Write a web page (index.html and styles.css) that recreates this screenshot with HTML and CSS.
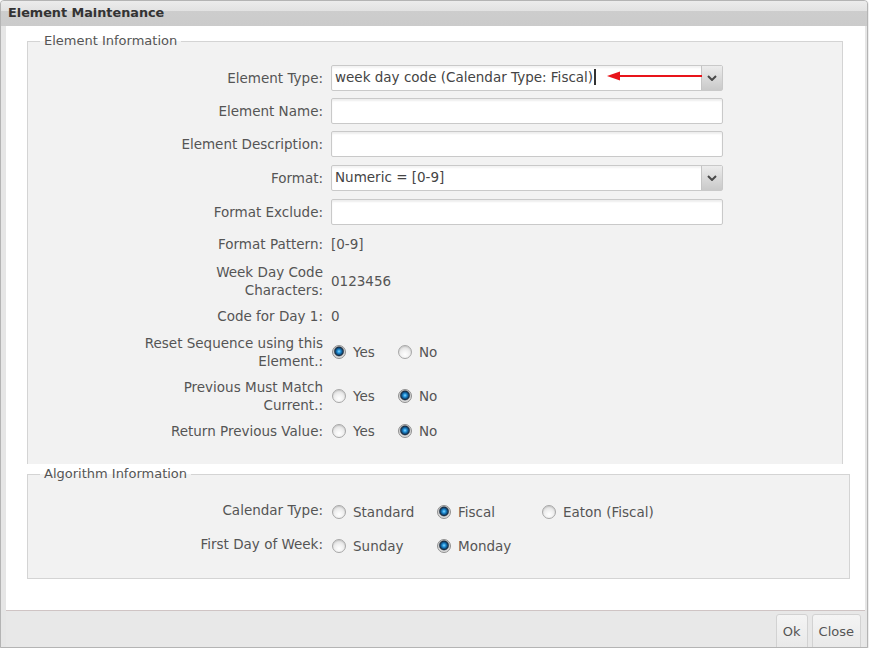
FILE: index.html
```html
<!DOCTYPE html>
<html>
<head>
<meta charset="utf-8">
<title>Element Maintenance</title>
<link rel="stylesheet" href="styles.css">
</head>
<body>
<div class="dialog">
  <div class="titlebar">Element Maintenance</div>
  <div class="frame">
    <div class="panel">
      <fieldset class="group group-element">
        <legend>Element Information</legend>
        <div class="row">
          <div class="label">Element Type:</div>
          <div class="select">
            <span class="select-text">week day code (Calendar Type: Fiscal)<span class="caret"></span></span>
            <span class="select-btn"><svg width="10" height="6" viewBox="0 0 10 6"><path d="M1 1 L5 5 L9 1" fill="none" stroke="#4a4a4a" stroke-width="2"/></svg></span>
            <svg class="annot" width="100" height="12" viewBox="0 0 100 12"><line x1="10" y1="6" x2="95" y2="6" stroke="#e8141a" stroke-width="2"/><path d="M0 6 L13 1.5 L13 10.5 Z" fill="#e8141a"/></svg>
          </div>
        </div>
        <div class="row tight">
          <div class="label">Element Name:</div>
          <div class="input"></div>
        </div>
        <div class="row tight">
          <div class="label">Element Description:</div>
          <div class="input"></div>
        </div>
        <div class="row">
          <div class="label">Format:</div>
          <div class="select">
            <span class="select-text">Numeric = [0-9]</span>
            <span class="select-btn"><svg width="10" height="6" viewBox="0 0 10 6"><path d="M1 1 L5 5 L9 1" fill="none" stroke="#4a4a4a" stroke-width="2"/></svg></span>
          </div>
        </div>
        <div class="row">
          <div class="label">Format Exclude:</div>
          <div class="input"></div>
        </div>
        <div class="row text loose">
          <div class="label">Format Pattern:</div>
          <div class="value">[0-9]</div>
        </div>
        <div class="row text loose">
          <div class="label">Week Day Code<br>Characters:</div>
          <div class="value">0123456</div>
        </div>
        <div class="row text close">
          <div class="label">Code for Day 1:</div>
          <div class="value">0</div>
        </div>
        <div class="row text">
          <div class="label">Reset Sequence using this<br>Element.:</div>
          <div class="radios">
            <span class="opt"><span class="radio checked"></span>Yes</span>
            <span class="opt"><span class="radio"></span>No</span>
          </div>
        </div>
        <div class="row text close">
          <div class="label">Previous Must Match<br>Current.:</div>
          <div class="radios">
            <span class="opt"><span class="radio"></span>Yes</span>
            <span class="opt"><span class="radio checked"></span>No</span>
          </div>
        </div>
        <div class="row text close">
          <div class="label">Return Previous Value:</div>
          <div class="radios">
            <span class="opt"><span class="radio"></span>Yes</span>
            <span class="opt"><span class="radio checked"></span>No</span>
          </div>
        </div>
      </fieldset>
      <fieldset class="group group-algo">
        <legend>Algorithm Information</legend>
        <div class="row algo">
          <div class="label">Calendar Type:</div>
          <div class="radios wide">
            <span class="opt"><span class="radio"></span>Standard</span>
            <span class="opt"><span class="radio checked"></span>Fiscal</span>
            <span class="opt"><span class="radio"></span>Eaton (Fiscal)</span>
          </div>
        </div>
        <div class="row algo second">
          <div class="label">First Day of Week:</div>
          <div class="radios wide">
            <span class="opt"><span class="radio"></span>Sunday</span>
            <span class="opt"><span class="radio checked"></span>Monday</span>
          </div>
        </div>
      </fieldset>
    </div>
    <div class="footer">
      <button class="btn">Ok</button>
      <button class="btn">Close</button>
    </div>
  </div>
</div>
</body>
</html>
```
FILE: styles.css
```css
html, body {
  margin: 0;
  padding: 0;
  background: #ffffff;
}
body {
  font-family: "DejaVu Sans", Verdana, sans-serif;
  font-size: 13.5px;
  color: #555555;
}
.dialog {
  box-sizing: border-box;
  width: 868px;
  height: 648px;
  border: 1px solid #b4b4b4;
  border-radius: 4px 4px 0 0;
  background: #e6e6e6;
  display: flex;
  flex-direction: column;
  overflow: hidden;
  box-shadow: 0 1px 2px rgba(0,0,0,0.25);
}
.titlebar {
  height: 25px;
  flex: none;
  box-sizing: border-box;
  padding: 4px 0 0 7px;
  font-weight: bold;
  font-size: 12.8px;
  color: #333333;
  background: linear-gradient(#ececec 0%, #e2e2e2 40%, #cdcdcd 41%, #cbcbcb 100%);
}
.frame {
  flex: 1;
  display: flex;
  flex-direction: column;
  padding: 0 2px 0 5px;
}
.panel {
  background: #ffffff;
  height: 584px;
  box-sizing: border-box;
  padding-top: 7px;
}
.group {
  margin: 0 0 0 21px;
  background: #f2f2f2;
  border: 1px solid #d4d4d4;
  padding: 16px 0 22px 0;
  min-width: 0;
}
.group-element {
  width: 816px;
  box-sizing: border-box;
  border-bottom: none;
  padding-bottom: 24px;
}
.group-algo {
  width: 823px;
  box-sizing: border-box;
  margin-top: 2px;
  padding-top: 21px;
  padding-bottom: 23px;
}
legend {
  margin-left: 12px;
  padding: 0 4px;
  line-height: 16px;
  font-size: 13px;
  color: #555555;
}
.row {
  display: grid;
  grid-template-columns: 295px 392px;
  column-gap: 8px;
  align-items: center;
  margin-top: 8px;
}
.row:first-of-type { margin-top: 0; }
.row.tight { margin-top: 7px; }
.row.text { margin-top: 9px; }
.row.text.loose { margin-top: 10px; }
.row.text.close { margin-top: 8px; }
.label {
  text-align: right;
  line-height: 18px;
  color: #555555;
}
.value {
  line-height: 18px;
  color: #555555;
}
.input {
  height: 26px;
  box-sizing: border-box;
  border: 1px solid #c9c9c9;
  border-radius: 2px;
  background: #ffffff;
  box-shadow: inset 0 2px 2px rgba(0,0,0,0.07);
}
.select {
  position: relative;
  height: 26px;
  box-sizing: border-box;
  border: 1px solid #c9c9c9;
  border-radius: 2px;
  background: #ffffff;
  display: flex;
  align-items: center;
  box-shadow: inset 0 2px 2px rgba(0,0,0,0.05);
}
.select-text {
  flex: 1;
  padding-left: 3px;
  color: #444444;
  white-space: nowrap;
  display: flex;
  align-items: center;
  position: relative;
  top: -1px;
}
.caret {
  display: inline-block;
  width: 2px;
  height: 16px;
  margin-left: 1px;
  background: #333333;
}
.select-btn {
  align-self: stretch;
  width: 20px;
  border-left: 1px solid #c4c4c4;
  background: linear-gradient(#ececec, #c9c9c9);
  display: flex;
  align-items: center;
  justify-content: center;
}
.annot {
  position: absolute;
  left: 275px;
  top: 4px;
}
.radios {
  display: flex;
  align-items: center;
}
.opt {
  display: flex;
  align-items: center;
  width: 66px;
  flex: none;
  white-space: nowrap;
  line-height: 18px;
  color: #555555;
}
.radios.wide .opt { width: 105px; }
.radio {
  display: inline-block;
  flex: none;
  width: 14px;
  height: 14px;
  box-sizing: border-box;
  border-radius: 50%;
  margin: 0 7px 0 1px;
  border: 1px solid #a7a7a7;
  background: radial-gradient(circle at 50% 70%, #ffffff 0, #f1f1f1 40%, #d2d2d2 100%);
  box-shadow: inset 0 1px 1px rgba(0,0,0,0.1);
}
.radio.checked {
  border-color: #8f8f8f;
  background: radial-gradient(circle at 50% 45%, #8ed8ff 0, #2a9be0 1.5px, #0f5a94 3px, #1b2f44 4.2px, #6d7680 4.8px, #d7d7d7 5.4px, #ededed 100%);
}
.row.algo {
  margin-top: 0;
}
.row.algo .label {
  position: relative;
  top: -2px;
}
.row.algo.second {
  margin-top: 16px;
}
.footer {
  flex: 1;
  border-top: 1px solid #cfc4c4;
  background: #e8e8e8;
  display: flex;
  justify-content: flex-end;
  align-items: flex-start;
  gap: 4px;
  padding: 3px 4px 0 0;
}
.btn {
  font-family: "DejaVu Sans", Verdana, sans-serif;
  font-size: 13px;
  color: #555555;
  height: 34px;
  padding: 0 6px;
  border: 1px solid #d2d2d2;
  border-radius: 3px 3px 0 0;
  background: linear-gradient(#f4f4f4, #e9e9e9);
}
```
